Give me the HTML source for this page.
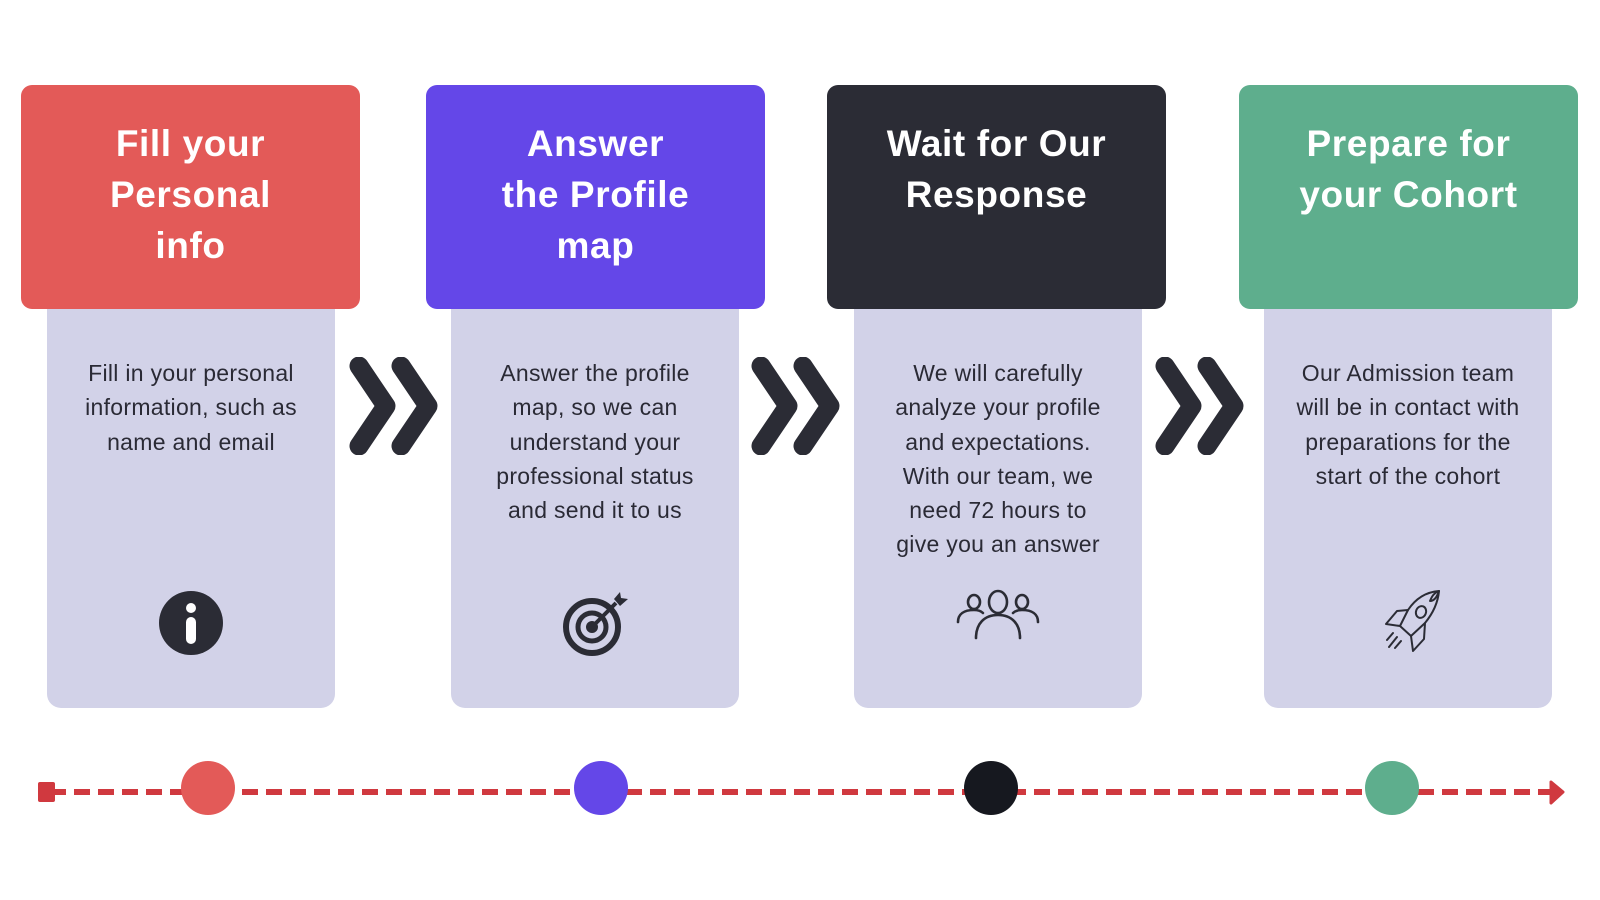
<!DOCTYPE html>
<html><head><meta charset="utf-8"><style>
html,body{margin:0;padding:0;width:1600px;height:900px;background:#fff;overflow:hidden;position:relative;font-family:"Liberation Sans",sans-serif}
.h{position:absolute;top:85px;width:339px;height:224px;border-radius:11px;color:#fff;text-align:center;font-size:37px;font-weight:bold;line-height:51px;box-sizing:border-box;padding-top:33px;letter-spacing:0.6px}
.b{position:absolute;top:309px;width:288px;height:399px;background:#d2d2e8;border-radius:0 0 14px 14px;text-align:center;color:#2a2a35;font-size:23px;line-height:34.3px;box-sizing:border-box;padding-top:47px;letter-spacing:0.3px}
.chev{position:absolute;top:357px}
.dot{position:absolute;width:54px;height:54px;border-radius:50%;top:761px}
.ic{position:absolute}
</style></head><body>
<div class="h" style="left:21px;background:#e35a58">Fill your<br>Personal<br>info</div>
<div class="b" style="left:47px">Fill in your personal<br>information, such as<br>name and email</div>
<div class="h" style="left:426px;background:#6447e8">Answer<br>the Profile<br>map</div>
<div class="b" style="left:451px">Answer the profile<br>map, so we can<br>understand your<br>professional status<br>and send it to us</div>
<div class="h" style="left:827px;background:#2b2c35">Wait for Our<br>Response</div>
<div class="b" style="left:854px">We will carefully<br>analyze your profile<br>and expectations.<br>With our team, we<br>need 72 hours to<br>give you an answer</div>
<div class="h" style="left:1239px;background:#5eae8d">Prepare for<br>your Cohort</div>
<div class="b" style="left:1264px">Our Admission team<br>will be in contact with<br>preparations for the<br>start of the cohort</div>

<svg class="chev" style="left:349px" width="96" height="98" viewBox="0 0 96 98"><path d="M10 9 L37 49 L10 89 M52 9 L79 49 L52 89" fill="none" stroke="#2b2c35" stroke-width="19" stroke-linecap="round" stroke-linejoin="round"/></svg>
<svg class="chev" style="left:751px" width="96" height="98" viewBox="0 0 96 98"><path d="M10 9 L37 49 L10 89 M52 9 L79 49 L52 89" fill="none" stroke="#2b2c35" stroke-width="19" stroke-linecap="round" stroke-linejoin="round"/></svg>
<svg class="chev" style="left:1155px" width="96" height="98" viewBox="0 0 96 98"><path d="M10 9 L37 49 L10 89 M52 9 L79 49 L52 89" fill="none" stroke="#2b2c35" stroke-width="19" stroke-linecap="round" stroke-linejoin="round"/></svg>

<!-- info -->
<svg class="ic" style="left:158px;top:590px" width="66" height="66" viewBox="0 0 66 66"><circle cx="33" cy="33" r="32" fill="#2b2c35"/><circle cx="33" cy="18" r="5" fill="#fff"/><rect x="28" y="27" width="10" height="27" rx="5" fill="#fff"/></svg>
<!-- target -->
<svg class="ic" style="left:558px;top:590px" width="80" height="74" viewBox="0 0 80 74"><circle cx="34" cy="37" r="26" fill="none" stroke="#2b2c35" stroke-width="6"/><circle cx="34" cy="37" r="14" fill="none" stroke="#2b2c35" stroke-width="5"/><circle cx="34" cy="37" r="6" fill="#2b2c35"/><path d="M34 37 L58 13" stroke="#2b2c35" stroke-width="4"/><path d="M56 9 L62 2 L63 8 L70 9 L62 16 Z" fill="#2b2c35"/></svg>
<!-- people -->
<svg class="ic" style="left:956px;top:588px" width="84" height="56" viewBox="0 0 84 56"><g fill="none" stroke="#2b2c35" stroke-width="2.6" stroke-linecap="round"><ellipse cx="42" cy="14" rx="9" ry="11"/><path d="M20 50 C20 36 28 27 42 27 C56 27 64 36 64 50"/><ellipse cx="18" cy="14" rx="6" ry="7"/><path d="M2 34 C2 26 8 22 18 22 C22 22 25 23 27 25"/><ellipse cx="66" cy="14" rx="6" ry="7"/><path d="M82 34 C82 26 76 22 66 22 C62 22 59 23 57 25"/></g></svg>
<!-- rocket -->
<svg class="ic" style="left:1376px;top:588px" width="66" height="66" viewBox="0 0 66 66"><g fill="none" stroke="#2b2c35" stroke-width="2" stroke-linejoin="round" stroke-linecap="round"><path d="M63 3 C50 4 40 10 32 22 L24 38 L35 48 L49 35 C58 24 62 14 63 3 Z"/><path d="M63 3 C58 5 56 8 54 13 C58 13 61 9 63 3"/><ellipse cx="45" cy="24" rx="5" ry="6" transform="rotate(20 45 24)"/><path d="M32 22 L21 23 L10 36 L24 38"/><path d="M49 35 L48 51 L37 63 L35 48"/><path d="M17 45 L11 52 M21 49 L13 59 M25 53 L19 60"/></g></svg>

<!-- timeline -->
<svg style="position:absolute;left:0;top:770px" width="1600" height="45" viewBox="0 0 1600 45"><line x1="50" y1="22" x2="1552" y2="22" stroke="#d0393f" stroke-width="6" stroke-dasharray="16 8"/><rect x="38" y="12" width="17" height="20" rx="2" fill="#d0393f"/><path d="M1551 12 L1563 22 L1551 33 Z" fill="#d0393f" stroke="#d0393f" stroke-width="3" stroke-linejoin="round"/></svg>
<div class="dot" style="left:181px;background:#e35a58"></div>
<div class="dot" style="left:574px;background:#6447e8"></div>
<div class="dot" style="left:964px;background:#16181f"></div>
<div class="dot" style="left:1365px;background:#5eae8d"></div>
</body></html>
